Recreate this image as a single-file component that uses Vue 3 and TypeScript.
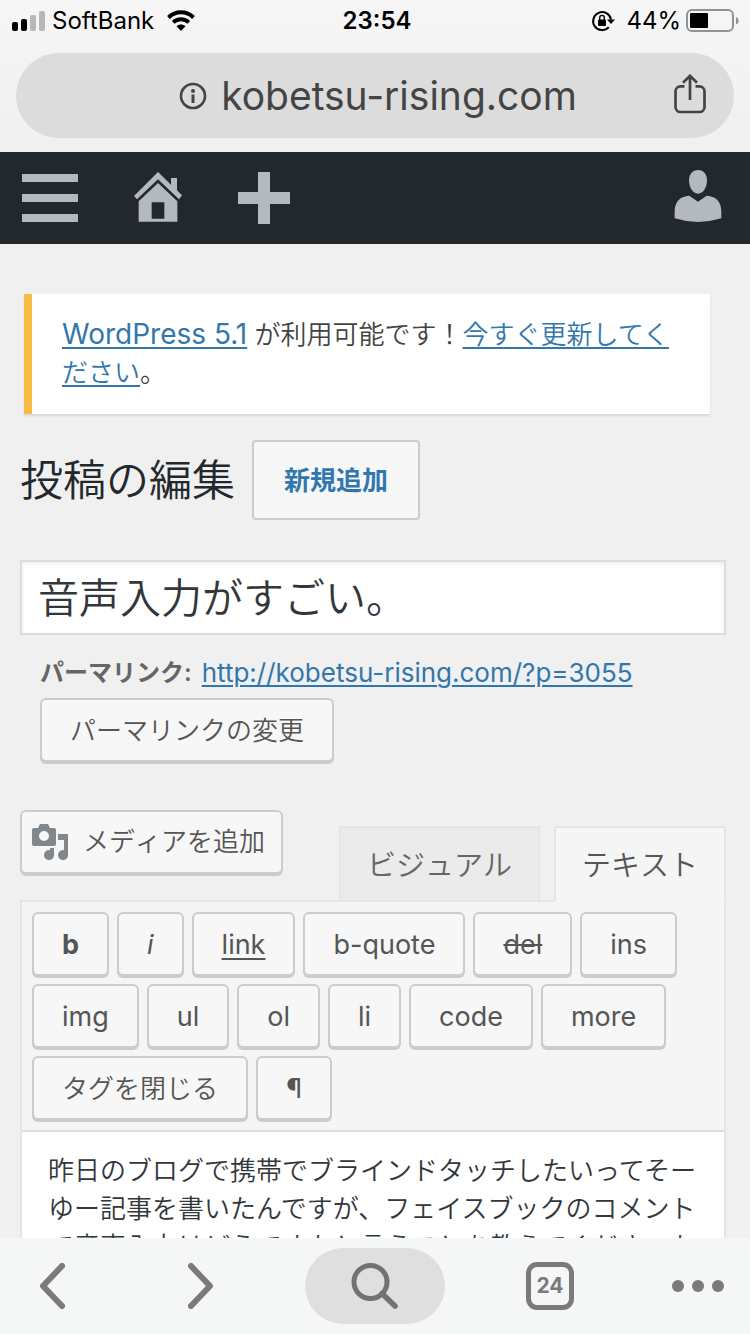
<script setup lang="ts">
import { ref } from 'vue'

interface QuickTag {
  label: string
  kind?: string
}

const title = ref('音声入力がすごい。')
const body = ref(
  '昨日のブログで携帯でブラインドタッチしたいってそーゆー記事を書いたんですが、フェイスブックのコメントで音声入力はどうですかと言うことを教えてくださった'
)

const quickTags: QuickTag[] = [
  { label: 'b', kind: 'bold' },
  { label: 'i', kind: 'italic' },
  { label: 'link', kind: 'underline' },
  { label: 'b-quote' },
  { label: 'del', kind: 'strike' },
  { label: 'ins' },
  { label: 'img' },
  { label: 'ul' },
  { label: 'ol' },
  { label: 'li' },
  { label: 'code' },
  { label: 'more' },
  { label: 'タグを閉じる', kind: 'kana' },
  { label: '¶' }
]
</script>

<template>
  <div class="screen">
    <header class="browser-top">
      <div class="status">
        <div class="status-left">
          <svg class="signal" width="34" height="22" viewBox="0 0 34 22" aria-hidden="true">
            <rect x="0" y="12" width="6" height="9" rx="2" fill="#000" />
            <rect x="9" y="9" width="6" height="12" rx="2" fill="#000" />
            <rect x="18" y="5" width="6" height="16" rx="2" fill="#b8b8b8" />
            <rect x="27" y="1" width="6" height="20" rx="2" fill="#b8b8b8" />
          </svg>
          <span class="carrier">SoftBank</span>
          <svg width="28" height="22" viewBox="0 0 28 22" aria-hidden="true">
            <path d="M1.5 7.5C8.5.6 19.500.6 26.500 7.500" fill="none" stroke="#000" stroke-width="4" />
            <path d="M6.200 12.400C10.500 8.200 17.500 8.200 21.800 12.400" fill="none" stroke="#000" stroke-width="3.800" />
            <path d="M9.500 16.300C12 14 16 14 18.500 16.300L14 21Z" fill="#000" />
          </svg>
        </div>
        <span class="clock">23:54</span>
        <div class="status-right">
          <svg class="lock" width="24" height="22" viewBox="0 0 24 22" aria-hidden="true">
            <path d="M17.800 17.200A9 9 0 1 1 20 9.500" fill="none" stroke="#000" stroke-width="2" />
            <path d="M16 9.500H24L20 14Z" fill="#000" />
            <rect x="7" y="9.500" width="8" height="6.500" rx="1" fill="#000" />
            <path d="M8.700 10V7.700a2.300 2.300 0 0 1 4.600 0V10" fill="none" stroke="#000" stroke-width="1.400" />
          </svg>
          <span class="percent">44%</span>
          <svg width="54" height="24" viewBox="0 0 54 24" aria-hidden="true">
            <rect x="1" y="1" width="46" height="21" rx="5" fill="none" stroke="#929292" stroke-width="2" />
            <rect x="4" y="4" width="18" height="15" rx="1" fill="#000" />
            <path d="M50 8c3.500 1.500 3.500 6 0 7.500Z" fill="#929292" />
          </svg>
        </div>
      </div>
      <div class="address">
        <button class="host" type="button">
          <svg width="28" height="28" viewBox="0 0 28 28" aria-hidden="true">
            <circle cx="14" cy="14" r="12" fill="none" stroke="#444" stroke-width="2.600" />
            <circle cx="14" cy="9" r="2" fill="#444" />
            <path d="M14 12.500V21" stroke="#444" stroke-width="3" />
          </svg>
          <span>kobetsu-rising.com</span>
        </button>
        <button class="share" type="button" aria-label="共有">
          <svg width="32" height="44" viewBox="0 0 32 44" aria-hidden="true">
            <g fill="none" stroke="#444" stroke-width="2.700">
              <path d="M10.500 12.400H6.500A5 5 0 0 0 1.500 17.400V33A5 5 0 0 0 6.500 38H25.500A5 5 0 0 0 30.500 33V17.400A5 5 0 0 0 25.500 12.400H21.500" />
              <path d="M16 26V2.500M9 8.700L16 1.800L23 8.700" />
            </g>
          </svg>
        </button>
      </div>
    </header>

    <nav class="admin-bar">
      <button type="button" aria-label="メニュー">
        <svg width="56" height="48" viewBox="0 0 56 48" aria-hidden="true">
          <path d="M0 0H56V8H0ZM0 20H56V28H0ZM0 40H56V48H0Z" fill="#b4b9be" />
        </svg>
      </button>
      <a href="#home" aria-label="サイトを表示">
        <svg width="48" height="52" viewBox="402 516 144 156" aria-hidden="true">
          <path d="M474 516L513 554V534H531V571L546 586L537 598L474 538L411 598L402 588Z" fill="#b4b9be" />
          <path fill-rule="evenodd" d="M474 549L532 604V665H416V604ZM455 607V656H493V607Z" fill="#b4b9be" />
        </svg>
      </a>
      <a href="#new" aria-label="新規">
        <svg width="52" height="52" viewBox="0 0 52 52" aria-hidden="true">
          <path d="M20 0H32V20H52V32H32V52H20V32H0V20H20Z" fill="#b4b9be" />
        </svg>
      </a>
      <a class="account" href="#account" aria-label="アカウント">
        <svg width="48" height="56" viewBox="897 510 144 168" aria-hidden="true">
          <path d="M969 510C986 510 996 523 996 541C996 562 985 581 969 581C953 581 942 562 942 541C942 523 952 510 969 510Z" fill="#b4b9be" />
          <path d="M899 655V635C899 608 913 588 943 587L969 605L995 587C1025 588 1039 608 1039 635V655Q969 677 899 655Z" fill="#b4b9be" />
        </svg>
      </a>
    </nav>

    <main class="page">
      <p class="notice">
        <a class="version" href="#about">WordPress 5.1</a> が利用可能です！<a href="#update">今すぐ更新してください</a>。
      </p>

      <div class="heading">
        <h1>投稿の編集</h1>
        <a class="add-new" href="#post-new">新規追加</a>
      </div>

      <input v-model="title" class="title" type="text" aria-label="タイトル" />

      <div class="permalink">
        <div class="permalink-line">
          <strong>パーマリンク:</strong>
          <a href="#post-3055">http://kobetsu-rising.com/?p=3055</a>
        </div>
        <button class="button kana" type="button">パーマリンクの変更</button>
      </div>

      <div class="editor-tools">
        <button class="button kana media" type="button">
          <svg width="36" height="36" viewBox="0 0 36 36" aria-hidden="true">
            <path
              fill-rule="evenodd"
              fill="#82878c"
              d="M6 4L8 0H16L18 4H22Q24 4 24 6V20Q24 22 22 22H2Q0 22 0 20V6Q0 4 2 4ZM12 7A5 5 0 1 0 12 17A5 5 0 1 0 12 7Z"
            />
            <path fill="#82878c" d="M26 10H36V31A5 5 0 1 1 32 26.200V16H26Z" />
            <path fill="#82878c" d="M18 24H22V31A5 5 0 1 1 18 26.200Z" />
          </svg>
          <span>メディアを追加</span>
        </button>
        <div class="tabs">
          <button class="tab" type="button">ビジュアル</button>
          <button class="tab active" type="button">テキスト</button>
        </div>
      </div>

      <section class="editor">
        <div class="toolbar">
          <button v-for="tag in quickTags" :key="tag.label" class="button" :class="tag.kind" type="button">
            {{ tag.label }}
          </button>
        </div>
        <textarea v-model="body" class="content" aria-label="本文"></textarea>
      </section>
    </main>

    <nav class="browser-bottom">
      <div class="side">
        <button type="button" aria-label="戻る">
          <svg width="26" height="46" viewBox="0 0 26 46" aria-hidden="true">
            <path d="M22 3L3 23L22 43" fill="none" stroke="#7a7a7a" stroke-width="6" stroke-linecap="round" stroke-linejoin="round" />
          </svg>
        </button>
        <button type="button" aria-label="進む">
          <svg width="26" height="46" viewBox="0 0 26 46" aria-hidden="true">
            <path d="M3 3L22 23L3 43" fill="none" stroke="#7a7a7a" stroke-width="6" stroke-linecap="round" stroke-linejoin="round" />
          </svg>
        </button>
      </div>
      <button class="search" type="button" aria-label="検索">
        <svg width="48" height="48" viewBox="0 0 48 48" aria-hidden="true">
          <circle cx="19.500" cy="20" r="16.500" fill="none" stroke="#727272" stroke-width="5" />
          <path d="M31 31.500L44 44" stroke="#727272" stroke-width="5.500" stroke-linecap="round" />
        </svg>
      </button>
      <div class="side end">
        <button type="button" aria-label="タブ一覧"><span class="tab-count">24</span></button>
        <button type="button" aria-label="その他">
          <svg width="52" height="12" viewBox="0 0 52 12" aria-hidden="true">
            <g fill="#7a7a7a">
              <circle cx="6" cy="6" r="6" />
              <circle cx="26" cy="6" r="6" />
              <circle cx="46" cy="6" r="6" />
            </g>
          </svg>
        </button>
      </div>
    </nav>
  </div>
</template>

<style>
body {
  margin: 0;
  background: #f0f0f0;
}
</style>

<style scoped>
.screen {
  display: flex;
  flex-direction: column;
  height: 100vh;
  overflow: hidden;
  font-family: Inter, 'Noto Sans CJK JP', sans-serif;
  font-size: 26px;
  line-height: 38px;
  color: #444;
  background: #f0f0f0;
}

.screen * {
  box-sizing: border-box;
}

svg {
  display: block;
  flex: none;
}

button,
input,
textarea {
  margin: 0;
  font: inherit;
  color: inherit;
}

button {
  padding: 0;
  border: 0;
  background: none;
  white-space: nowrap;
}

a {
  color: #3177ad;
  text-underline-offset: 3px;
  text-decoration-thickness: 2px;
}

.browser-top {
  flex: none;
  padding: 0 16px 14px;
  background: linear-gradient(#f6f6f6, #f0f0f0);
}

.status {
  display: grid;
  grid-template-columns: 1fr auto 1fr;
  align-items: center;
  height: 41px;
  margin: 0 -6px 12px -4px;
  font-size: 24px;
  color: #000;
}

.status-left,
.status-right {
  display: flex;
  align-items: center;
}

.carrier {
  margin: 0 13px 0 6px;
}

.clock {
  padding-left: 2px;
  font-weight: 600;
}

.status-right {
  justify-content: flex-end;
}

.percent {
  margin: 0 5px 0 11px;
}

.address {
  display: grid;
  grid-template-columns: 1fr auto 1fr;
  align-items: center;
  height: 85px;
  padding: 0 28px;
  border-radius: 43px;
  background: #dcdcdc;
}

.host {
  grid-column: 2;
  display: flex;
  align-items: center;
  gap: 14px;
  padding-left: 6px;
  font-size: 39px;
  line-height: 56px;
}

.share {
  justify-self: end;
}

.admin-bar {
  flex: none;
  display: flex;
  align-items: center;
  gap: 56px;
  height: 92px;
  padding: 0 28px 0 22px;
  background: #23282d;
}

.account {
  margin-left: auto;
}

.page {
  flex: 1;
  display: flex;
  flex-direction: column;
  min-height: 0;
  padding: 50px 24px 0 20px;
  overflow: hidden;
}

.notice {
  flex: none;
  margin: 0 16px 26px 4px;
  padding: 22px 24px 22px 30px;
  border-left: 8px solid #f6bb42;
  background: #fff;
  box-shadow: 0 2px 2px rgba(0, 0, 0, 0.1);
  font-weight: 350;
}

.version {
  font-size: 28px;
  line-height: 28px;
  font-weight: 400;
}

.heading {
  display: flex;
  align-items: center;
  gap: 17px;
  margin-bottom: 40px;
}

h1 {
  margin: 0;
  font-size: 43px;
  line-height: 60px;
  font-weight: 350;
  color: #23282d;
}

.add-new {
  padding: 20px 30px 18px;
  border: 2px solid #ccc;
  border-radius: 4px;
  background: #f7f7f7;
  font-weight: 600;
  text-decoration: none;
}

.title {
  flex: none;
  width: 100%;
  height: 75px;
  padding: 0 16px 6px;
  border: 2px solid #ddd;
  border-radius: 0;
  background: #fff;
  box-shadow: inset 0 2px 4px rgba(0, 0, 0, 0.07);
  font-size: 41px;
  font-weight: 350;
  color: #32373c;
}

.permalink {
  padding: 19px 20px 0;
  margin-bottom: 48px;
}

.permalink-line {
  display: flex;
  gap: 10px;
  margin-bottom: 6px;
  white-space: nowrap;
}

.permalink strong {
  font-size: 24px;
  font-weight: 600;
  color: #666;
}

.button {
  height: 64px;
  padding: 2px 28px 0;
  border: 2px solid #ccc;
  border-radius: 6px;
  background: #f7f7f7;
  box-shadow: 0 2px 0 #ccc;
  font-size: 27px;
  color: #555;
}

.button.kana {
  font-size: 26px;
  font-weight: 350;
  font-kerning: none;
}

.editor-tools {
  display: flex;
  align-items: flex-start;
  justify-content: space-between;
}

.button.media {
  display: flex;
  align-items: center;
  gap: 15px;
  padding: 0 16px 0 10px;
}

.tabs {
  display: flex;
  gap: 14px;
  margin-top: 16px;
}

.tab {
  position: relative;
  height: 76px;
  margin-bottom: -2px;
  padding: 3px 26px 0;
  border: 2px solid #e5e5e5;
  background: #ebebeb;
  font-size: 29px;
  font-weight: 350;
  font-kerning: none;
  color: #666;
}

.tab.active {
  border-bottom-color: #f5f5f5;
  background: #f5f5f5;
  color: #555;
}

.editor {
  flex: 1;
  display: flex;
  flex-direction: column;
  min-height: 0;
  border: 2px solid #e5e5e5;
  border-bottom: 0;
  background: #f5f5f5;
}

.toolbar {
  display: flex;
  flex-wrap: wrap;
  gap: 8px;
  padding: 10px;
  border-bottom: 2px solid #ddd;
}

.bold {
  font-weight: 700;
}

.italic {
  font-style: italic;
}

.underline {
  text-decoration: underline 2px;
  text-underline-offset: 4px;
}

.strike {
  text-decoration: line-through 2px;
}

.content {
  flex: 1;
  width: 100%;
  min-height: 0;
  padding: 20px 24px 0 26px;
  border: 0;
  border-radius: 0;
  outline: 0;
  resize: none;
  overflow: hidden;
  background: #fff;
  font-weight: 350;
  color: #32373c;
}

.browser-bottom {
  flex: none;
  display: grid;
  grid-template-columns: 1fr 140px 1fr;
  align-items: center;
  height: 96px;
  background: #f5f6f6;
}

.side {
  display: flex;
  gap: 42px;
}

.side button {
  display: flex;
  align-items: center;
  justify-content: center;
  width: 106px;
  height: 76px;
}

.side.end {
  justify-content: flex-end;
  gap: 44px;
}

.side.end button {
  width: 104px;
}

.search {
  display: flex;
  align-items: center;
  justify-content: center;
  height: 76px;
  border-radius: 38px;
  background: #dfdfdf;
}

.tab-count {
  width: 48px;
  height: 48px;
  border: 5px solid #7a7a7a;
  border-radius: 11px;
  font-size: 21px;
  font-weight: 700;
  color: #7a7a7a;
}
</style>
